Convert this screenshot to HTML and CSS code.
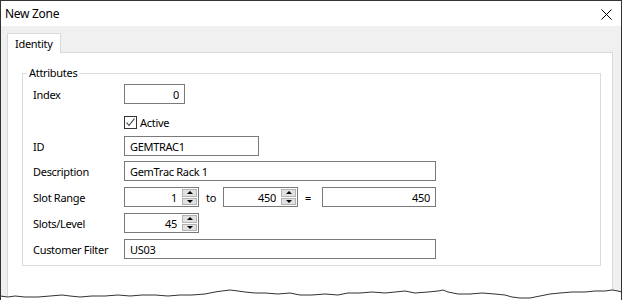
FILE: index.html
```html
<!DOCTYPE html>
<html>
<head>
<meta charset="utf-8">
<link rel="stylesheet" href="styles.css">
</head>
<body>
<div class="window">
  <div class="titlebar">
    <span class="title">New Zone</span>
    <svg class="close" width="11" height="11" viewBox="0 0 11 11"><path d="M0.5 0.5L10.5 10.5M10.5 0.5L0.5 10.5" stroke="#000" stroke-width="1" fill="none"/></svg>
  </div>
  <div class="client">
    <div class="tabs"><div class="tab">Identity</div></div>
    <div class="panel">
      <fieldset class="group">
        <legend>Attributes</legend>
        <div class="row"><span class="label">Index</span><input class="field w-index num" value="0"></div>
        <div class="row check-row"><span class="label"></span><span class="checkbox"><svg width="11" height="11" viewBox="0 0 11 11"><path d="M1.5 5.5L4 8.5L9.5 1.5" stroke="#333" stroke-width="1.1" fill="none"/></svg></span><span class="check-text">Active</span></div>
        <div class="row"><span class="label">ID</span><input class="field w-id" value="GEMTRAC1"></div>
        <div class="row tight"><span class="label">Description</span><input class="field w-wide" value="GemTrac Rack 1"></div>
        <div class="row"><span class="label">Slot Range</span>
          <div class="spin"><input class="num" value="1"><div class="btns"><span class="btn up"></span><span class="btn down"></span></div></div>
          <span class="sep">to</span>
          <div class="spin"><input class="num" value="450"><div class="btns"><span class="btn up"></span><span class="btn down"></span></div></div>
          <span class="sep">=</span>
          <input class="field w-result num" value="450">
        </div>
        <div class="row"><span class="label">Slots/Level</span>
          <div class="spin"><input class="num" value="45"><div class="btns"><span class="btn up"></span><span class="btn down"></span></div></div>
        </div>
        <div class="row"><span class="label">Customer Filter</span><input class="field w-wide" value="US03"></div>
      </fieldset>
    </div>
  </div>
  <svg class="torn" width="622" height="16" viewBox="0 284 622 16">
    <path d="M0 296 L8 297 L15 296 L25 297 L38 297 L50 296 L62 295 L70 296 L80 297 L92 296 L105 296 L118 295 L130 296 L142 295 L155 295 L168 296 L180 295 L192 295 L205 294 L215 292 L222 291 L230 290 L238 291 L245 292 L255 293 L265 293 L278 294 L290 293 L300 295 L312 295 L325 294 L338 295 L348 293 L360 293 L372 292 L385 293 L395 292 L405 291 L415 293 L428 292 L438 291 L443 290 L448 292 L458 294 L470 294 L482 293 L495 294 L505 295 L512 297 L520 298 L530 298 L540 296 L550 294 L560 293 L572 292 L585 292 L595 291 L605 291 L612 290 L618 291 L622 292 L622 300 L0 300 Z" fill="#fff" stroke="none"/>
    <path d="M0 296 L8 297 L15 296 L25 297 L38 297 L50 296 L62 295 L70 296 L80 297 L92 296 L105 296 L118 295 L130 296 L142 295 L155 295 L168 296 L180 295 L192 295 L205 294 L215 292 L222 291 L230 290 L238 291 L245 292 L255 293 L265 293 L278 294 L290 293 L300 295 L312 295 L325 294 L338 295 L348 293 L360 293 L372 292 L385 293 L395 292 L405 291 L415 293 L428 292 L438 291 L443 290 L448 292 L458 294 L470 294 L482 293 L495 294 L505 295 L512 297 L520 298 L530 298 L540 296 L550 294 L560 293 L572 292 L585 292 L595 291 L605 291 L612 290 L618 291 L622 292" fill="none" stroke="#333" stroke-width="1"/>
  </svg>
</div>
</body>
</html>
```
FILE: styles.css
```css
html, body {
  margin: 0;
  background: #fff;
}
body {
  font-family: "Noto Sans", "Open Sans", sans-serif;
  font-size: 11px;
  letter-spacing: -0.3px;
  color: #000;
}
.window {
  position: relative;
  width: 622px;
  height: 300px;
  box-sizing: border-box;
  border: 1px solid #333;
  border-bottom: none;
  display: flex;
  flex-direction: column;
  overflow: hidden;
}
.titlebar {
  height: 25px;
  flex: none;
  background: #fff;
  display: flex;
  align-items: center;
  justify-content: space-between;
  padding: 0 9px 0 4px;
  font-size: 12px;
}
.close {
  display: block;
  margin-top: 1px;
}
.client {
  flex: 1;
  background: #f0f0f0;
  padding: 7px 8px 0 6px;
  display: flex;
  flex-direction: column;
}
.tabs {
  display: flex;
  flex: none;
}
.tab {
  box-sizing: border-box;
  width: 54px;
  height: 20px;
  line-height: 19px;
  border: 1px solid #d9d9d9;
  border-bottom: none;
  background: #fff;
  padding-left: 7px;
  margin-bottom: -1px;
  position: relative;
  z-index: 1;
}
.panel {
  flex: 1;
  background: #fff;
  border: 1px solid #d9d9d9;
  padding: 12px 11px 0 14px;
}
.group {
  margin: 0;
  min-width: 0;
  border: 1px solid #dcdcdc;
  padding: 3px 10px 6px 10px;
}
.group legend {
  padding: 0 2px;
  margin-left: -6px;
  line-height: 16px;
}
.row {
  display: flex;
  align-items: center;
  height: 20px;
  margin-top: 6px;
}
.row:first-of-type {
  margin-top: 0;
}
.row.tight {
  margin-top: 5px;
}
.label {
  width: 91px;
  flex: none;
}
.field, .spin input {
  font-family: inherit;
  font-size: 11px;
  letter-spacing: -0.3px;
  color: #000;
  outline: none;
}
.field {
  box-sizing: border-box;
  height: 20px;
  border: 1px solid #7a7a7a;
  padding: 0 5px;
  margin: 0;
  background: #fff;
}
.num {
  text-align: right;
}
.field.num {
  padding-right: 5px;
}
.w-index { width: 61px; }
.w-id { width: 135px; }
.w-wide { width: 312px; }
.w-result { width: 114px; }
.check-row {
  box-sizing: border-box;
  padding-top: 4px;
}
.checkbox {
  box-sizing: border-box;
  width: 13px;
  height: 13px;
  border: 1px solid #333;
  display: flex;
  align-items: center;
  justify-content: center;
  background: #fff;
}
.checkbox svg {
  display: block;
}
.check-text {
  margin-left: 3px;
}
.spin {
  box-sizing: border-box;
  width: 75px;
  height: 20px;
  border: 1px solid #7a7a7a;
  display: flex;
  background: #fff;
}
.spin input {
  flex: 1;
  min-width: 0;
  border: none;
  padding: 0 5px 0 2px;
  margin: 0;
  background: transparent;
}
.btns {
  width: 16px;
  flex: none;
  display: flex;
  flex-direction: column;
  gap: 1px;
  padding: 1px 1px 1px 0;
  box-sizing: border-box;
}
.btn {
  flex: 1;
  box-sizing: border-box;
  background: #e1e1e1;
  border: 1px solid #b4b4b4;
  display: flex;
  align-items: center;
  justify-content: center;
}
.btn::after {
  content: "";
  width: 0;
  height: 0;
  border-left: 3px solid transparent;
  border-right: 3px solid transparent;
}
.btn.up::after {
  border-bottom: 3px solid #000;
}
.btn.down::after {
  border-top: 3px solid #000;
}
.sep {
  box-sizing: border-box;
  width: 24px;
  padding-left: 7px;
  flex: none;
}
.torn {
  position: absolute;
  left: -1px;
  bottom: 0;
  display: block;
}
```
